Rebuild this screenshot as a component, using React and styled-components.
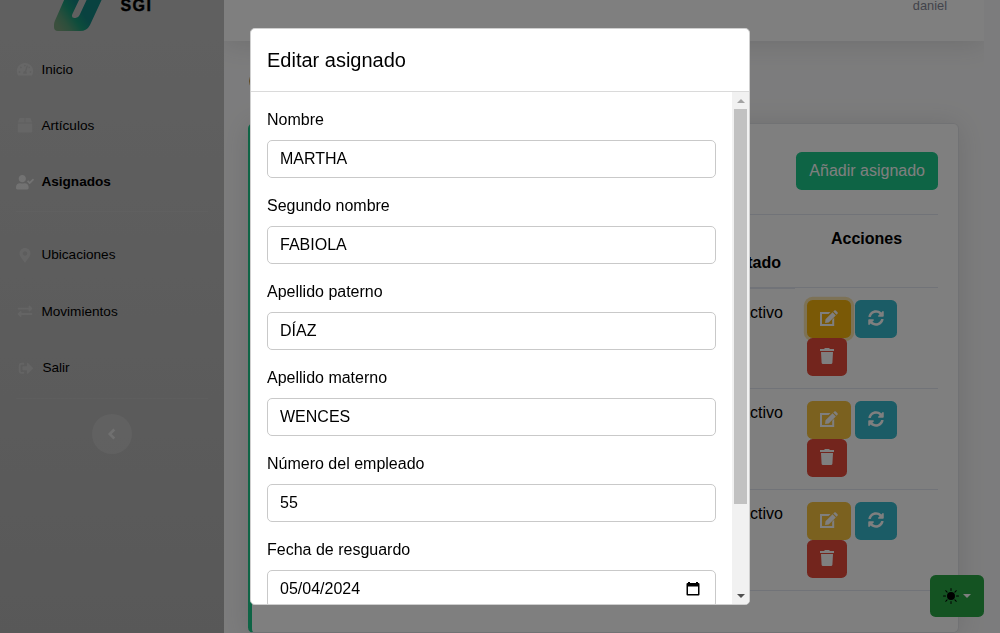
import React from "react";
import styled, { createGlobalStyle, css } from "styled-components";
import {
  FaTachometerAlt, FaUserCheck, FaMapMarkerAlt, FaExchangeAlt,
  FaSignOutAlt, FaSyncAlt,
} from "react-icons/fa";
import { BsSunFill } from "react-icons/bs";

const GlobalStyle = createGlobalStyle`
  *, *::before, *::after { box-sizing: border-box; }
  body {
    margin: 0;
    overflow: hidden;
    background: #f9f9fa;
    color: #000;
    font: 16px/1.5 "Liberation Sans", Arial, sans-serif;
  }
`;

const Page = styled.div`
  display: flex;
  height: 633px;
  overflow: hidden;
`;

const Sidebar = styled.nav`
  display: flex;
  flex-direction: column;
  flex: none;
  width: 224px;
  background: linear-gradient(180deg, #c1c1c1, #b1b1b1);
`;

const Brand = styled.div`
  display: flex;
  align-items: flex-start;
  height: 41px;
  padding-left: 53px;
  svg { flex: none; display: block; }
`;

const BrandName = styled.span`
  margin: -6px 0 0 16.5px;
  font-weight: 800;
  letter-spacing: 1.4px;
  -webkit-text-stroke: 0.4px #000;
`;

const NavItem = styled.a`
  display: flex;
  align-items: center;
  height: 56.4px;
  padding: 1px 0 0 ${(p) => (p.$shift ? 17 : 16)}px;
  font-size: 13.6px;
  font-weight: ${(p) => (p.$active ? 700 : 400)};
  svg {
    width: 18px;
    height: 14.5px;
    margin: -1px 7.4px 0 0;
    overflow: visible;
    color: rgba(255, 255, 255, ${(p) => (p.$active ? 0.62 : 0.24)});
  }
`;

const SidebarDivider = styled.hr`
  width: 192px;
  height: 1px;
  margin: ${(p) => p.$margin};
  border: 0;
  background: rgba(255, 255, 255, 0.08);
`;

const Toggle = styled.button`
  display: grid;
  place-items: center;
  align-self: center;
  width: 40px;
  height: 40px;
  padding: 0;
  border: 0;
  border-radius: 50%;
  background: rgba(255, 255, 255, 0.17);
  color: rgba(255, 255, 255, 0.5);
`;

const Content = styled.div`
  flex: none;
  width: 760px;
  height: 660px;
  overflow: hidden;
`;

const Topbar = styled.header`
  display: flex;
  justify-content: flex-end;
  height: 41px;
  padding-right: 37px;
  background: #fff;
  box-shadow: 0 2.4px 28px rgba(58, 58, 60, 0.15);
  color: #858796;
  font-size: 12.8px;
  line-height: 11px;
`;

const Heading = styled.div`
  display: flex;
  align-items: center;
  height: 83px;
  padding: 0 0 3px 25px;
`;

const HeadingDot = styled.i`
  width: 20px;
  height: 20px;
  border-radius: 50%;
  background: #c08f3c;
`;

const Card = styled.section`
  width: 711px;
  height: 510px;
  margin: -1px 0 0 24px;
  padding: 28px 20px 0;
  border: 1px solid #e3e4e8;
  border-left: 4px solid #1cc88a;
  border-radius: 5.6px;
  background: #fff;
  box-shadow: 0 2.4px 28px rgba(58, 58, 60, 0.15);
`;

const Actions = styled.div`
  display: flex;
  justify-content: flex-end;
  margin-bottom: 24px;
`;

const tones = {
  success: "#1cc88a",
  warning: "#f6c23e",
  warningActive: "#f4b30d",
  info: "#36b9cc",
  danger: "#e74a3b",
};

const Button = styled.button`
  display: inline-flex;
  align-items: center;
  justify-content: center;
  height: 38px;
  padding: 0 13px;
  border: 0;
  border-radius: 5.6px;
  background: ${(p) => tones[p.$tone]};
  color: #fff;
  font: inherit;
  svg { margin-bottom: 2px; }
  ${(p) => p.$focused && css`box-shadow: 0 0 0 3.2px rgba(247, 203, 91, 0.5);`}
`;

const RowGrid = styled.div`
  display: grid;
  grid-template-columns: 1fr 143px;
  border-top: 1px solid #e3e6f0;
`;

const StateHead = styled.div`
  height: 74px;
  margin-bottom: -2px;
  padding: 36px 14px 0 0;
  border-bottom: 1px solid #e3e6f0;
  text-align: right;
  font-weight: 700;
`;

const ActionHead = styled.div`
  height: 72px;
  padding-top: 12px;
  text-align: center;
  font-weight: 700;
`;

const StateCell = styled.div`
  padding: ${(p) => (p.$first ? 13 : 12)}px 12px 0 0;
  text-align: right;
`;

const ActionCell = styled.div`
  display: flex;
  flex-wrap: wrap;
  column-gap: 4px;
  height: 100px;
  padding: 12px;
`;

const ThemeButton = styled.button`
  position: fixed;
  right: 16px;
  bottom: 16px;
  display: flex;
  align-items: center;
  justify-content: center;
  gap: 4px;
  width: 54px;
  height: 42px;
  padding: 0;
  border: 0;
  border-radius: 5.6px;
  background: #28a745;
  color: #000;
`;

const Caret = styled.i`
  border: 4.5px solid transparent;
  border-top-color: #fff;
  border-bottom: 0;
`;

const Backdrop = styled.div`
  position: fixed;
  inset: 0;
  background: rgba(0, 0, 0, 0.5);
`;

const Dialog = styled.div`
  position: fixed;
  top: 28px;
  left: 250px;
  display: flex;
  flex-direction: column;
  width: 500px;
  height: 577px;
  overflow: hidden;
  border: 1px solid #cfcfcf;
  border-radius: 4.8px;
  background: #fff;
`;

const DialogHeader = styled.header`
  flex: none;
  height: 63px;
  padding: 16px;
  border-bottom: 1px solid #dadada;
  font-size: 20px;
  line-height: 30px;
`;

const DialogBody = styled.div`
  display: flex;
  flex: 1;
  min-height: 0;
`;

const Form = styled.form`
  display: flex;
  flex-direction: column;
  flex: 1;
  gap: 16px;
  padding: 16px;
  overflow: hidden;
`;

const Field = styled.label`
  display: flex;
  flex: none;
  flex-direction: column;
  gap: 8px;
  line-height: 24px;
`;

const Control = styled.span`
  display: flex;
  align-items: center;
  justify-content: space-between;
  height: 38px;
  padding: 0 15px 0 12px;
  border: 1px solid #c9c9c9;
  border-radius: 5px;
`;

const Scrollbar = styled.div`
  display: flex;
  flex: none;
  flex-direction: column;
  align-items: center;
  width: 17px;
  background: #f1f1f1;
`;

const Arrow = styled.i`
  display: grid;
  place-items: center;
  width: 17px;
  height: 17px;
  &::before {
    content: "";
    border: 4px solid transparent;
    ${(p) => (p.$up
      ? "border-top: 0; border-bottom-color: #a3a3a3;"
      : "border-bottom: 0; border-top-color: #505050;")}
  }
`;

const Thumb = styled.div`
  width: 13px;
  height: 395px;
  margin-bottom: auto;
  background: #c1c1c1;
`;

const Logo = () => (
  <svg width="51" height="32" viewBox="0 0 51 32">
    <defs>
      <linearGradient id="leaf" gradientUnits="userSpaceOnUse" x1="7" y1="29" x2="34" y2="10">
        <stop offset="0" stopColor="#769f7a" />
        <stop offset="0.25" stopColor="#579e79" />
        <stop offset="0.55" stopColor="#1a9a78" />
        <stop offset="0.85" stopColor="#128480" />
        <stop offset="1" stopColor="#128480" />
      </linearGradient>
    </defs>
    <path
      fill="url(#leaf)"
      fillRule="evenodd"
      d="M12-2 1.8 21Q1 23 1 25V27Q1 31 5 31H27Q34 31 37 25L49.5-2ZM27-2 19.3 14.2Q18 18 21.5 18H22.5Q25.3 18 26.6 15L34.5-2Z"
    />
  </svg>
);

const BoxIcon = () => (
  <svg viewBox="0 0 16 16" fill="currentColor">
    <path d="M2.700 0H7.500V5H.2L1.600.9Q1.900 0 2.700 0ZM8.500 0H13.300Q14.100 0 14.400.9L15.800 5H8.500ZM0 6H16V14.500Q16 16 14.500 16H1.500Q0 16 0 14.500Z" />
  </svg>
);

const ChevronIcon = () => (
  <svg width="16" height="16" viewBox="0 0 16 16" fill="none" stroke="currentColor" strokeWidth="2.600">
    <path d="M10.300 3.500 5.800 8 10.300 12.500" />
  </svg>
);

const EditIcon = () => (
  <svg width="18" height="16" viewBox="0 0 18 16" fill="currentColor">
    <path d="M0 2H10.500L8.500 4H2V14H12.200V9.800L14.200 7.800V16H0Z" />
    <path d="M12.600 2.200 15.800 5.400 8.700 12.500 5.100 13 5.500 9.300ZM13.300 1.500 14.300.5Q15 -.2 15.800.5L17.500 2.200Q18.200 3 17.500 3.700L16.500 4.700Z" />
  </svg>
);

const TrashIcon = () => (
  <svg width="14" height="16" viewBox="0 0 14 16" fill="currentColor">
    <path d="M0 1H4.200L4.800 0H9.200L9.800 1H14V3H0ZM1 4H13L12.400 14.700Q12.300 16 11 16H3Q1.700 16 1.600 14.700Z" />
  </svg>
);

const CalendarIcon = () => (
  <svg width="14" height="16" viewBox="0 0 14 16">
    <path fill="#000" fillRule="evenodd" d="M2 1H4V2H10V1H12V2H12.5Q13.5 2 13.5 3V13.5Q13.5 14.5 12.5 14.5H1.500Q.5 14.5.5 13.500V3Q.5 2 1.500 2H2ZM2 5.500V13H12V5.500Z" />
  </svg>
);

const mainLinks = [
  { label: "Inicio", Icon: FaTachometerAlt },
  { label: "Artículos", Icon: BoxIcon },
  { label: "Asignados", Icon: FaUserCheck, active: true },
];

const moreLinks = [
  { label: "Ubicaciones", Icon: FaMapMarkerAlt },
  { label: "Movimientos", Icon: FaExchangeAlt },
  { label: "Salir", Icon: FaSignOutAlt, shift: true },
];

const fields = [
  ["Nombre", "MARTHA"],
  ["Segundo nombre", "FABIOLA"],
  ["Apellido paterno", "DÍAZ"],
  ["Apellido materno", "WENCES"],
  ["Número del empleado", "55"],
  ["Fecha de resguardo", "05/04/2024", true],
];

const renderLink = ({ label, Icon, active, shift }) => (
  <NavItem key={label} $active={active} $shift={shift}>
    <Icon />
    {label}
  </NavItem>
);

export default function App() {
  return (
    <>
      <GlobalStyle />
      <Page>
        <Sidebar>
          <Brand>
            <Logo />
            <BrandName>SGI</BrandName>
          </Brand>
          {mainLinks.map(renderLink)}
          <SidebarDivider $margin="0.8px 16px 15px" />
          {moreLinks.map(renderLink)}
          <SidebarDivider $margin="1.8px 16px 15px" />
          <Toggle><ChevronIcon /></Toggle>
        </Sidebar>
        <Content>
          <Topbar>daniel</Topbar>
          <Heading><HeadingDot /></Heading>
          <Card>
            <Actions><Button $tone="success">Añadir asignado</Button></Actions>
            <RowGrid>
              <StateHead>Estado</StateHead>
              <ActionHead>Acciones</ActionHead>
            </RowGrid>
            {[0, 1, 2].map((row) => (
              <RowGrid key={row}>
                <StateCell $first={row === 0}>Activo</StateCell>
                <ActionCell>
                  <Button $tone={row === 0 ? "warningActive" : "warning"} $focused={row === 0}>
                    <EditIcon />
                  </Button>
                  <Button $tone="info"><FaSyncAlt size={16} /></Button>
                  <Button $tone="danger"><TrashIcon /></Button>
                </ActionCell>
              </RowGrid>
            ))}
            <RowGrid />
          </Card>
        </Content>
      </Page>
      <ThemeButton>
        <BsSunFill size={16} />
        <Caret />
      </ThemeButton>
      <Backdrop />
      <Dialog role="dialog">
        <DialogHeader>Editar asignado</DialogHeader>
        <DialogBody>
          <Form>
            {fields.map(([label, value, date]) => (
              <Field key={label}>
                {label}
                <Control>
                  {value}
                  {date && <CalendarIcon />}
                </Control>
              </Field>
            ))}
          </Form>
          <Scrollbar>
            <Arrow $up />
            <Thumb />
            <Arrow />
          </Scrollbar>
        </DialogBody>
      </Dialog>
    </>
  );
}
